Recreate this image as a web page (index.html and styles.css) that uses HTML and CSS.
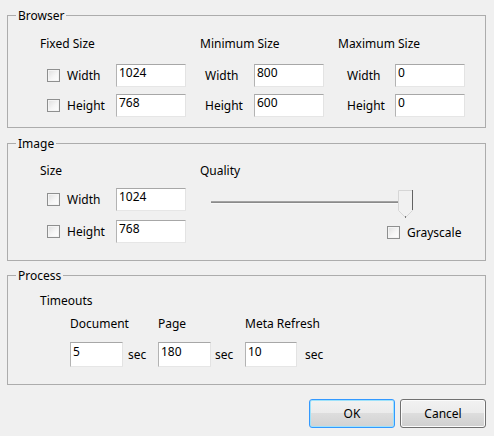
FILE: index.html
```html
<!DOCTYPE html>
<html>
<head>
<meta charset="utf-8">
<title>Options</title>
<link rel="stylesheet" href="styles.css">
</head>
<body>
<div class="dialog">
  <fieldset class="group g-browser">
    <legend>Browser</legend>
    <div class="cols b-cols">
      <div class="col col-fixed">
        <div class="head">Fixed Size</div>
        <div class="rows">
          <div class="row"><input type="checkbox" class="cb"><span class="lbl">Width</span><input type="text" class="tb" value="1024"></div>
          <div class="row"><input type="checkbox" class="cb"><span class="lbl">Height</span><input type="text" class="tb" value="768"></div>
        </div>
      </div>
      <div class="col col-min">
        <div class="head">Minimum Size</div>
        <div class="rows">
          <div class="row"><span class="lbl">Width</span><input type="text" class="tb" value="800"></div>
          <div class="row"><span class="lbl">Height</span><input type="text" class="tb" value="600"></div>
        </div>
      </div>
      <div class="col col-max">
        <div class="head">Maximum Size</div>
        <div class="rows">
          <div class="row"><span class="lbl lbl-max">Width</span><input type="text" class="tb" value="0"></div>
          <div class="row"><span class="lbl lbl-max">Height</span><input type="text" class="tb" value="0"></div>
        </div>
      </div>
    </div>
  </fieldset>

  <fieldset class="group g-image">
    <legend>Image</legend>
    <div class="cols i-cols">
      <div class="col col-fixed">
        <div class="head i-head">Size</div>
        <div class="rows i-rows">
          <div class="row"><input type="checkbox" class="cb"><span class="lbl">Width</span><input type="text" class="tb" value="1024"></div>
          <div class="row"><input type="checkbox" class="cb"><span class="lbl">Height</span><input type="text" class="tb" value="768"></div>
        </div>
      </div>
      <div class="col col-quality">
        <div class="head i-head">Quality</div>
        <svg class="slider" width="215" height="30" viewBox="0 0 215 30">
          <rect x="1" y="13" width="190" height="1" fill="#a3a3a3"/>
          <rect x="1" y="14" width="190" height="1" fill="#8a8a8a"/>
          <rect x="1" y="15" width="190" height="1" fill="#f7f7f7"/>
          <polygon points="188.5,2.5 202.5,2.5 202.5,22.5 195.5,29.5 188.5,22.5" fill="#f1f1f1" stroke="#d6d6d6"/>
          <line x1="202.5" y1="2" x2="202.5" y2="22" stroke="#626262"/>
          <rect x="195" y="28" width="1" height="2" fill="#7a7a7a"/>
        </svg>
        <div class="gray-row"><input type="checkbox" class="cb"><span>Grayscale</span></div>
      </div>
    </div>
  </fieldset>

  <fieldset class="group g-process">
    <legend>Process</legend>
    <div class="p-body">
      <div class="head p-head">Timeouts</div>
      <div class="tcols">
        <div class="tcol tcol-1">
          <div class="head t-head">Document</div>
          <div class="trow"><input type="text" class="tb tb-t" value="5"><span class="sec sec-1">sec</span></div>
        </div>
        <div class="tcol tcol-2">
          <div class="head t-head">Page</div>
          <div class="trow"><input type="text" class="tb tb-t" value="180"><span class="sec sec-2">sec</span></div>
        </div>
        <div class="tcol tcol-3">
          <div class="head t-head">Meta Refresh</div>
          <div class="trow"><input type="text" class="tb tb-t tb-t3" value="10"><span class="sec sec-3">sec</span></div>
        </div>
      </div>
    </div>
  </fieldset>

  <div class="buttons">
    <button class="btn btn-default">OK</button>
    <button class="btn">Cancel</button>
  </div>
</div>
</body>
</html>
```

FILE: styles.css
```css
* { box-sizing: border-box; }
html, body { margin: 0; padding: 0; }
body {
  width: 494px;
  height: 436px;
  overflow: hidden;
  background: #f0f0f0;
  color: #000;
  font-family: "Noto Sans", "Open Sans", "DejaVu Sans", sans-serif;
  font-size: 12px;
  line-height: 15px;
}
.dialog {
  display: flex;
  flex-direction: column;
  padding: 8px 8px 0 7px;
}
.group {
  margin: 0;
  padding: 0;
  min-width: 0;
  border: 1px solid #acacac;
}
.group legend {
  margin-left: 8px;
  padding: 0 2px;
  line-height: 15px;
}
.g-image { margin-top: 8px; }
.g-process { margin-top: 7px; }

.cols { display: flex; align-items: flex-start; }
.col { display: flex; flex-direction: column; }
.head { height: 15px; white-space: nowrap; }
.rows { display: flex; flex-direction: column; gap: 7px; margin-top: 13px; }
.row { display: flex; align-items: center; height: 23px; }

.b-cols { padding: 13px 0 10px; }
.col-fixed { margin-left: 32px; }
.col-fixed .row { padding-left: 7px; }
.col-min { margin-left: 14px; }
.col-min .row { padding-left: 5px; }
.col-max { margin-left: 14px; }
.col-max .row { padding-left: 9px; }
.lbl { width: 49px; }
.lbl-max { width: 48px; }

.cb {
  appearance: none;
  -webkit-appearance: none;
  width: 13px;
  height: 13px;
  margin: 0 7px 0 0;
  border: 1px solid #8e8f8f;
  background: linear-gradient(135deg, #dedede 0%, #f6f6f6 55%, #ffffff 100%);
  box-shadow: inset 0 0 0 1px #f4f4f4;
  flex: none;
}

.tb {
  width: 70px;
  height: 23px;
  margin: 0;
  padding: 0 2px 6px 2px;
  border-style: solid;
  border-width: 1px;
  border-color: #a7a7a7 #e3e3e3 #e6e6e6 #b3b3b3;
  background: #fff;
  font: inherit;
  color: #000;
  outline: none;
  flex: none;
}

.i-cols { padding: 12px 0 17px; }
.i-rows { gap: 9px; margin-top: 10px; }
.col-quality { margin-left: 14px; }
.slider { display: block; margin: 10px 0 0 10px; }
.gray-row {
  display: flex;
  align-items: center;
  height: 15px;
  margin: 7px 0 0 187px;
}

.p-body { padding: 10px 0 17px 32px; }
.tcols { display: flex; margin: 8px 0 0 30px; }
.tcol { display: flex; flex-direction: column; }
.tcol-1 { width: 88px; }
.tcol-2 { width: 87px; }
.trow { display: flex; align-items: center; margin-top: 11px; height: 25px; }
.tb-t { width: 53px; height: 25px; padding: 1px 2px 7px 2px; }
.tb-t3 { width: 52px; }
.sec-1 { margin-left: 5px; }
.sec-2 { margin-left: 4px; }
.sec-3 { margin-left: 8px; }

.buttons {
  display: flex;
  justify-content: flex-end;
  gap: 5px;
  margin-top: 14px;
}
.btn {
  width: 86px;
  height: 29px;
  margin: 0;
  padding: 0;
  border: 1px solid #707070;
  border-radius: 3px;
  background: linear-gradient(#f2f2f2 0%, #ebebeb 50%, #dddddd 50%, #cfcfcf 100%);
  box-shadow: inset 0 0 0 1px #fbfbfb;
  font: inherit;
  color: #000;
}
.btn-default {
  border-color: #3399ff;
  box-shadow: inset 0 0 0 1px #9ee2fb;
  background: linear-gradient(#eaf6fd 0%, #d9f0fc 50%, #bee6fd 50%, #a7d9f5 100%);
  background: linear-gradient(#f2f2f2 0%, #ebebeb 50%, #dddddd 50%, #d2d2d2 100%);
}
```
